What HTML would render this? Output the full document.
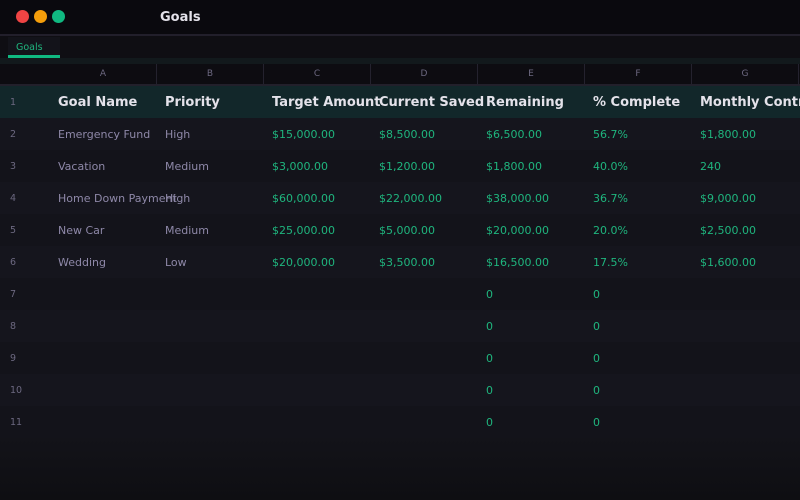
<!DOCTYPE html>
<html><head><meta charset="utf-8"><style>
*{margin:0;padding:0;box-sizing:border-box}
body{width:800px;height:500px;overflow:hidden;background:#111116;font-family:"DejaVu Sans","Liberation Sans",sans-serif;position:relative}
.a{position:absolute;white-space:nowrap}
.dot{position:absolute;top:10px;width:13px;height:13px;border-radius:50%}
.cell{position:absolute;font-size:11px;color:#8e88a8;line-height:32px;white-space:nowrap;margin-top:1px}
.g{color:#1fb57e}
.h{font-size:13px;font-weight:bold;color:#e4e2ea;line-height:32px;position:absolute;white-space:nowrap}
.rn{position:absolute;left:10px;font-size:9.5px;color:#6c6880;line-height:32px;margin-top:1px}
.ch{position:absolute;top:64px;height:20px;line-height:20px;font-size:9px;color:#6c6880;text-align:center;border-right:1px solid #24222e;width:107px}
</style></head><body>
<div class="a" style="left:0;top:0;width:800px;height:34px;background:#0a090e"></div>
<div class="a" style="left:0;top:34px;width:800px;height:2px;background:#221f2b"></div>
<div class="dot" style="left:16px;background:#ef4444"></div>
<div class="dot" style="left:34px;background:#f59e0b"></div>
<div class="dot" style="left:52px;background:#10b981"></div>
<div class="a" style="left:160px;top:10px;font-size:13px;font-weight:bold;color:#e4e2ea">Goals</div>
<div class="a" style="left:0;top:36px;width:800px;height:22px;background:#0f0e13"></div>
<div class="a" style="left:8px;top:37px;width:52px;height:21px;background:#13131a"></div>
<div class="a" style="left:16px;top:42px;font-size:9.5px;color:#1fb57e">Goals</div>
<div class="a" style="left:8px;top:55px;width:52px;height:3px;background:#10b981"></div>
<div class="a" style="left:0;top:58px;width:800px;height:6px;background:#12191c"></div>
<div class="a" style="left:0;top:64px;width:800px;height:20px;background:#0d0c11"></div>
<div class="a" style="left:0;top:84px;width:800px;height:2px;background:#22202b"></div>
<div class="ch" style="left:50px">A</div>
<div class="ch" style="left:157px">B</div>
<div class="ch" style="left:264px">C</div>
<div class="ch" style="left:371px">D</div>
<div class="ch" style="left:478px">E</div>
<div class="ch" style="left:585px">F</div>
<div class="ch" style="left:692px">G</div>
<div class="a" style="left:0;top:86px;width:800px;height:32px;background:#12272a"></div>
<div class="rn" style="top:86px">1</div>
<div class="h" style="left:58px;top:87px">Goal Name</div>
<div class="h" style="left:165px;top:87px">Priority</div>
<div class="h" style="left:272px;top:87px">Target Amount</div>
<div class="h" style="left:379px;top:87px">Current Saved</div>
<div class="h" style="left:486px;top:87px">Remaining</div>
<div class="h" style="left:593px;top:87px">% Complete</div>
<div class="h" style="left:700px;top:87px">Monthly Contr</div>
<div class="a" style="left:0;top:118px;width:800px;height:32px;background:#15151d"></div>
<div class="a" style="left:0;top:150px;width:800px;height:32px;background:#13131a"></div>
<div class="a" style="left:0;top:182px;width:800px;height:32px;background:#15151d"></div>
<div class="a" style="left:0;top:214px;width:800px;height:32px;background:#13131a"></div>
<div class="a" style="left:0;top:246px;width:800px;height:32px;background:#15151d"></div>
<div class="a" style="left:0;top:278px;width:800px;height:32px;background:#13131a"></div>
<div class="a" style="left:0;top:310px;width:800px;height:32px;background:#15151d"></div>
<div class="a" style="left:0;top:342px;width:800px;height:32px;background:#13131a"></div>
<div class="a" style="left:0;top:374px;width:800px;height:32px;background:#15151d"></div>
<div class="a" style="left:0;top:406px;width:800px;height:32px;background:#13131a"></div>
<div class="a" style="left:0;top:438px;width:800px;height:62px;background:linear-gradient(#131319,#0e0e12)"></div>

<div class="rn" style="top:118px">2</div>
<div class="cell" style="left:58px;top:118px">Emergency Fund</div><div class="cell" style="left:165px;top:118px">High</div>
<div class="cell g" style="left:272px;top:118px">$15,000.00</div><div class="cell g" style="left:379px;top:118px">$8,500.00</div><div class="cell g" style="left:486px;top:118px">$6,500.00</div><div class="cell g" style="left:593px;top:118px">56.7%</div><div class="cell g" style="left:700px;top:118px">$1,800.00</div>
<div class="rn" style="top:150px">3</div>
<div class="cell" style="left:58px;top:150px">Vacation</div><div class="cell" style="left:165px;top:150px">Medium</div>
<div class="cell g" style="left:272px;top:150px">$3,000.00</div><div class="cell g" style="left:379px;top:150px">$1,200.00</div><div class="cell g" style="left:486px;top:150px">$1,800.00</div><div class="cell g" style="left:593px;top:150px">40.0%</div><div class="cell g" style="left:700px;top:150px">240</div>
<div class="rn" style="top:182px">4</div>
<div class="cell" style="left:58px;top:182px">Home Down Payment</div><div class="cell" style="left:165px;top:182px">High</div>
<div class="cell g" style="left:272px;top:182px">$60,000.00</div><div class="cell g" style="left:379px;top:182px">$22,000.00</div><div class="cell g" style="left:486px;top:182px">$38,000.00</div><div class="cell g" style="left:593px;top:182px">36.7%</div><div class="cell g" style="left:700px;top:182px">$9,000.00</div>
<div class="rn" style="top:214px">5</div>
<div class="cell" style="left:58px;top:214px">New Car</div><div class="cell" style="left:165px;top:214px">Medium</div>
<div class="cell g" style="left:272px;top:214px">$25,000.00</div><div class="cell g" style="left:379px;top:214px">$5,000.00</div><div class="cell g" style="left:486px;top:214px">$20,000.00</div><div class="cell g" style="left:593px;top:214px">20.0%</div><div class="cell g" style="left:700px;top:214px">$2,500.00</div>
<div class="rn" style="top:246px">6</div>
<div class="cell" style="left:58px;top:246px">Wedding</div><div class="cell" style="left:165px;top:246px">Low</div>
<div class="cell g" style="left:272px;top:246px">$20,000.00</div><div class="cell g" style="left:379px;top:246px">$3,500.00</div><div class="cell g" style="left:486px;top:246px">$16,500.00</div><div class="cell g" style="left:593px;top:246px">17.5%</div><div class="cell g" style="left:700px;top:246px">$1,600.00</div>
<div class="rn" style="top:278px">7</div><div class="cell g" style="left:486px;top:278px">0</div><div class="cell g" style="left:593px;top:278px">0</div>
<div class="rn" style="top:310px">8</div><div class="cell g" style="left:486px;top:310px">0</div><div class="cell g" style="left:593px;top:310px">0</div>
<div class="rn" style="top:342px">9</div><div class="cell g" style="left:486px;top:342px">0</div><div class="cell g" style="left:593px;top:342px">0</div>
<div class="rn" style="top:374px">10</div><div class="cell g" style="left:486px;top:374px">0</div><div class="cell g" style="left:593px;top:374px">0</div>
<div class="rn" style="top:406px">11</div><div class="cell g" style="left:486px;top:406px">0</div><div class="cell g" style="left:593px;top:406px">0</div>
</body></html>
